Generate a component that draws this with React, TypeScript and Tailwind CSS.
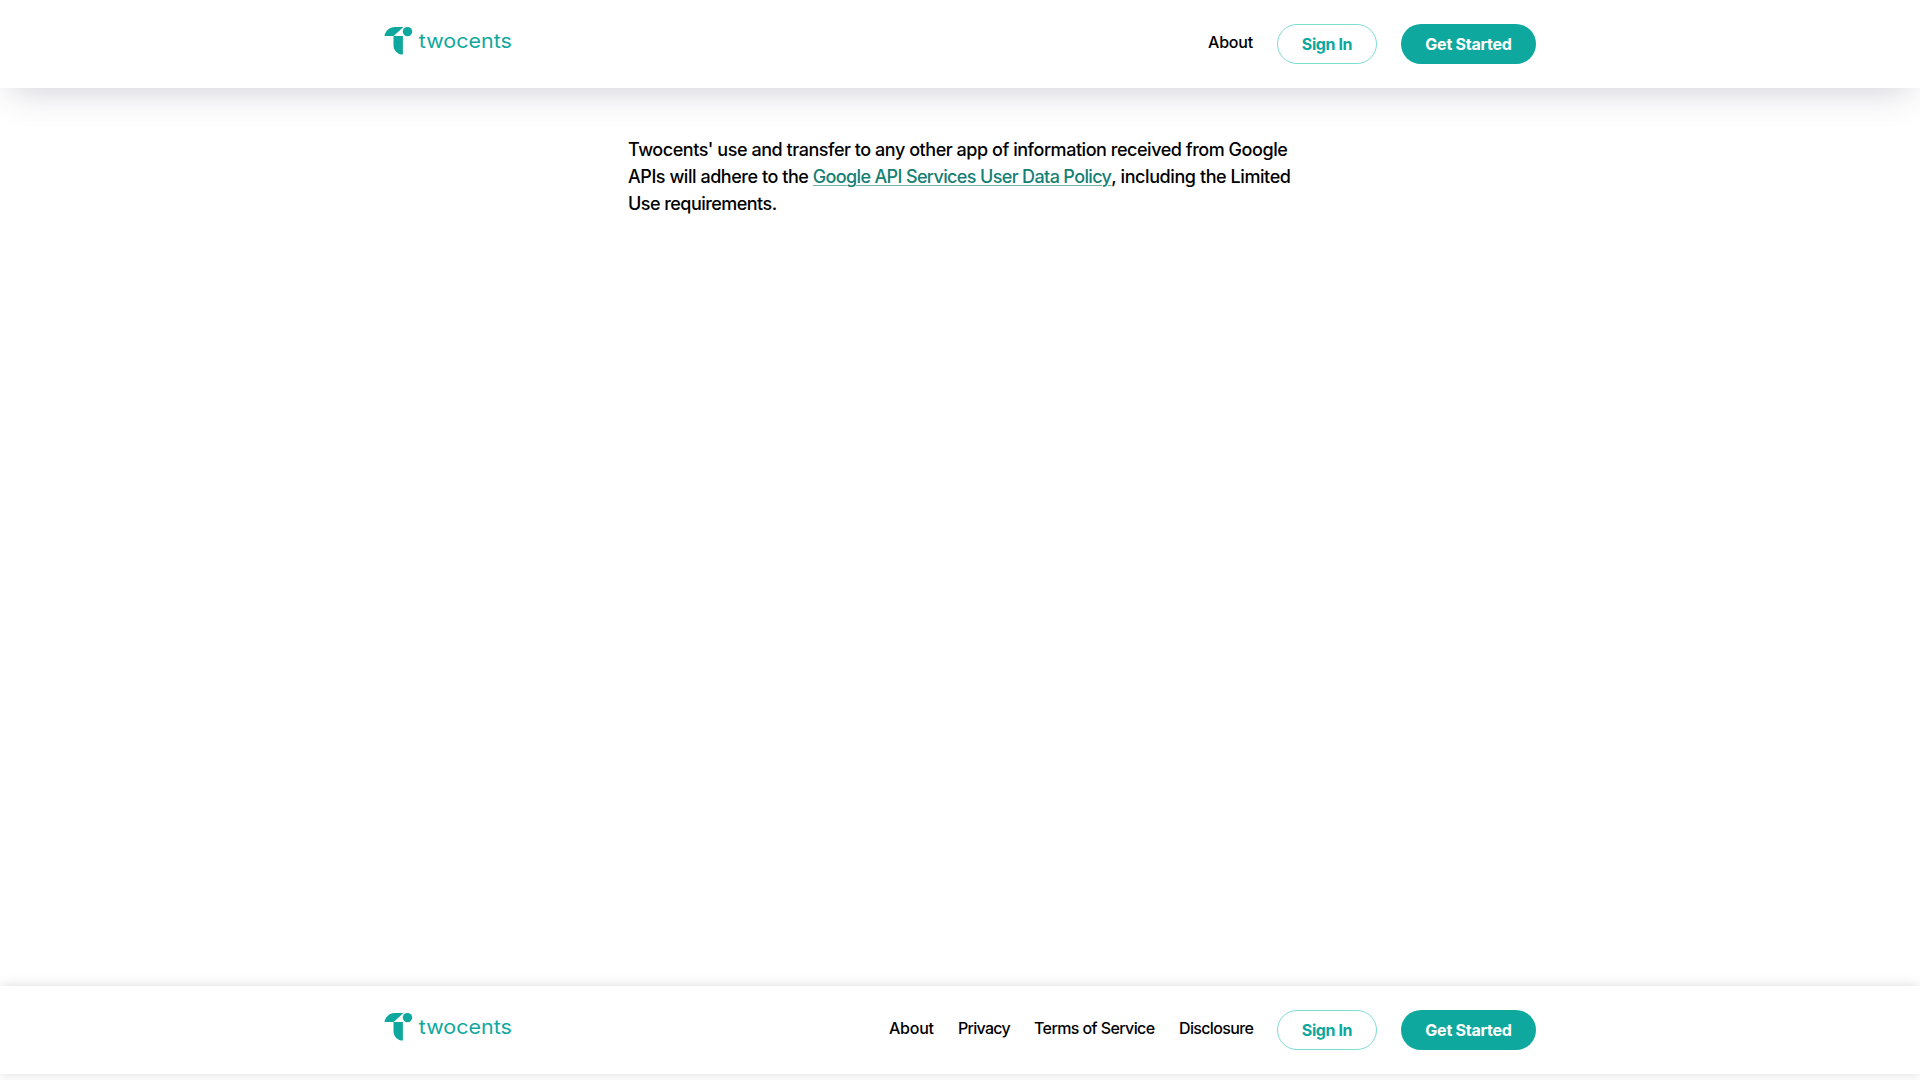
import React from "react";

function Logo() {
  return (
    <a href="#" aria-label="twocents" className="block h-[40px] w-[132px]">
      <svg width="132" height="40" viewBox="0 0 132 40" className="block overflow-visible" fill="#0fa89e">
        <path d="M.5 12C1.2 6.8 5.6 3 11 3H19.5L9.6 12Z" />
        <circle cx="23.5" cy="7.6" r="4.7" />
        <path d="M9.5 12H18.9V30.6C13.7 30.6 9.5 26.4 9.5 21.2Z" />
        <text x="34.8" y="24" fontSize="20" fontWeight="400" textLength="93" lengthAdjust="spacingAndGlyphs" fontFamily="Inter, sans-serif">
          twocents
        </text>
      </svg>
    </a>
  );
}

function Actions() {
  return (
    <>
      <button className="h-10 w-[100px] shrink-0 rounded-[20px] border border-[#7edcd3] pb-px text-center text-[16px] font-bold tracking-[-0.4px] text-[#0fa89e]">
        Sign In
      </button>
      <button className="h-10 w-[135px] shrink-0 rounded-[20px] bg-[#0fa89e] pb-px text-center text-[16px] font-bold tracking-[-0.25px] text-white">
        Get Started
      </button>
    </>
  );
}

export default function App() {
  return (
    <div className="flex h-[1080px] flex-col overflow-hidden bg-white font-['Inter',sans-serif] text-black">
      <header className="h-[88px] shrink-0 bg-white shadow-[0_12px_36px_-11px_rgba(50,50,88,0.26)]">
        <div className="mx-auto flex h-full w-[1152px] items-center justify-between">
          <Logo />
          <nav className="flex items-center gap-6">
            <a href="#" className="relative -top-0.5 w-[45px] whitespace-nowrap text-[16px] font-medium tracking-[-0.2px]">About</a>
            <Actions />
          </nav>
        </div>
      </header>

      <main className="mx-auto w-[664px] grow pt-12">
        <p className="whitespace-nowrap text-[18px] font-medium leading-[27px]">
          <span className="block tracking-[-0.46px]">
            Twocents' use and transfer to any other app of information received from Google
          </span>
          <span className="block tracking-[-0.46px]">
            APIs will adhere to the{" "}
            <a href="#" className="tracking-[-0.64px] text-[#157f74] underline decoration-[#73b2ac] decoration-1 underline-offset-2">Google API Services User Data Policy</a>
            <span className="tracking-[-0.42px]">, including the Limited</span>
          </span>
          <span className="block tracking-[-0.54px]">Use requirements.</span>
        </p>
      </main>

      <footer className="mb-[6px] h-[88px] shrink-0 bg-white shadow-[0_0_12px_rgba(0,0,0,0.14)]">
        <div className="mx-auto flex h-full w-[1152px] items-center justify-between">
          <Logo />
          <nav className="flex items-center gap-6 whitespace-nowrap text-[16px] font-medium">
            <a href="#" className="relative -top-0.5 w-[45px] tracking-[-0.25px]">About</a>
            <a href="#" className="relative -top-0.5 w-[52px] tracking-[-0.7px]">Privacy</a>
            <a href="#" className="relative -top-0.5 w-[121px] tracking-[-0.6px]">Terms of Service</a>
            <a href="#" className="relative -top-0.5 w-[74px] tracking-[-0.65px]">Disclosure</a>
            <Actions />
          </nav>
        </div>
      </footer>
    </div>
  );
}
